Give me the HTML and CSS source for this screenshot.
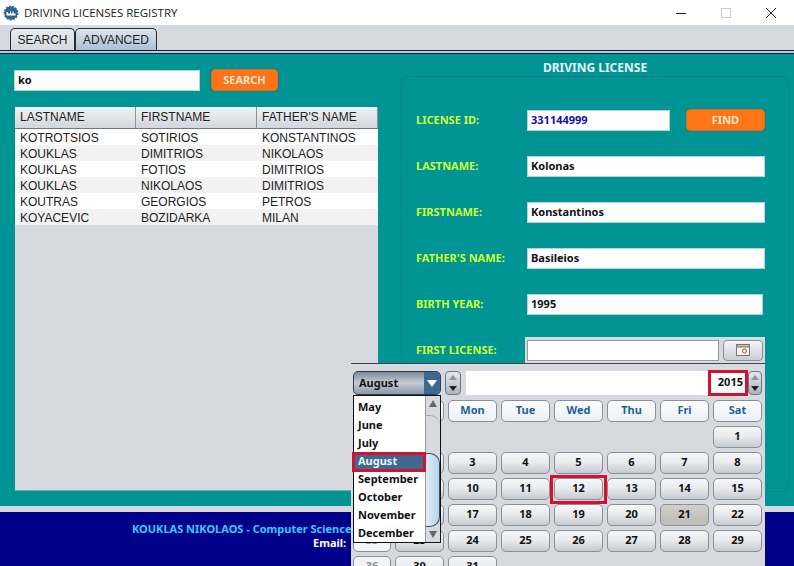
FILE: index.html
```html
<!DOCTYPE html>
<html lang="en">
<head>
  <meta charset="UTF-8">
  <title>Driving Licenses Registry</title>
  <link rel="stylesheet" href="styles.css">
</head>
<body>

  <div class="titlebar">
    <svg class="app-icon" width="16" height="16" viewBox="0 0 16 16">
      <circle cx="8" cy="8" r="6.6" fill="#2f6690" stroke="#2f6690" stroke-width="1.6" stroke-dasharray="2 1.2"/>
      <path d="M3.5 10.5h9V8.5h-2V6.5h-1v2h-1.5V6.5h-1v2H5V7H3.5z" fill="#fff"/>
    </svg>
    <span class="app-title">DRIVING LICENSES REGISTRY</span>
    <div class="winbtns">
      <svg width="12" height="12" viewBox="0 0 12 12"><path d="M1 6.5h10" stroke="#222" stroke-width="1"/></svg>
      <svg width="12" height="12" viewBox="0 0 12 12"><rect x="1.5" y="1.5" width="9" height="9" fill="none" stroke="#ccc"/></svg>
      <svg width="12" height="12" viewBox="0 0 12 12"><path d="M1 1l10 10M11 1L1 11" stroke="#222" stroke-width="1"/></svg>
    </div>
  </div>

  <div class="tabs">
    <div class="tab">SEARCH</div>
    <div class="tab tab-active">ADVANCED</div>
  </div>

  <div class="main">
    <div class="left">
      <div class="search-row">
        <div class="field search-field">ko</div>
        <div class="btn-orange search-btn">SEARCH</div>
      </div>
      <div class="table">
        <div class="table-head">
          <div>LASTNAME</div><div>FIRSTNAME</div><div>FATHER'S NAME</div>
        </div>
        <div class="table-row"><div>KOTROTSIOS</div><div>SOTIRIOS</div><div>KONSTANTINOS</div></div>
        <div class="table-row"><div>KOUKLAS</div><div>DIMITRIOS</div><div>NIKOLAOS</div></div>
        <div class="table-row"><div>KOUKLAS</div><div>FOTIOS</div><div>DIMITRIOS</div></div>
        <div class="table-row"><div>KOUKLAS</div><div>NIKOLAOS</div><div>DIMITRIOS</div></div>
        <div class="table-row"><div>KOUTRAS</div><div>GEORGIOS</div><div>PETROS</div></div>
        <div class="table-row"><div>KOYACEVIC</div><div>BOZIDARKA</div><div>MILAN</div></div>
      </div>
    </div>

    <div class="right">
      <div class="panel-title">DRIVING LICENSE</div>
      <div class="panel">
        <div class="form-row">
          <label>LICENSE ID:</label>
          <div class="field id-field">331144999</div>
          <div class="btn-orange find-btn">FIND</div>
        </div>
        <div class="form-row">
          <label>LASTNAME:</label>
          <div class="field wide-field">Kolonas</div>
        </div>
        <div class="form-row">
          <label>FIRSTNAME:</label>
          <div class="field wide-field">Konstantinos</div>
        </div>
        <div class="form-row">
          <label>FATHER'S NAME:</label>
          <div class="field wide-field">Basileios</div>
        </div>
        <div class="form-row">
          <label>BIRTH YEAR:</label>
          <div class="field year-field">1995</div>
        </div>
        <div class="form-row license-row">
          <label>FIRST LICENSE:</label>
          <div class="date-box">
            <div class="field date-field"></div>
            <div class="date-btn">
              <svg width="14" height="12" viewBox="0 0 14 12">
                <rect x="0.5" y="0.5" width="13" height="11" fill="#f6f3ee" stroke="#777"/>
                <rect x="0.5" y="0.5" width="13" height="2.5" fill="#c9b9a6" stroke="#777"/>
                <circle cx="8.5" cy="7" r="2" fill="none" stroke="#b5504a"/>
              </svg>
            </div>
          </div>
        </div>
      </div>
    </div>
  </div>

  <div class="footer">
    <div class="footer-name">KOUKLAS NIKOLAOS - Computer Science</div>
    <div class="footer-mail">Email:</div>
  </div>

  <div class="calendar">
    <div class="cal-top">
      <div class="month-combo">
        <span>August</span>
        <div class="combo-arrow"></div>
      </div>
      <div class="spinner"><i class="up"></i><i class="down"></i></div>
      <div class="year-field-cal">2015</div>
      <div class="spinner year-spinner"><i class="up"></i><i class="down"></i></div>
    </div>
    <div class="cal-grid">
      <div class="cell-empty"></div>
      <div class="day-name">Sun</div><div class="day-name">Mon</div><div class="day-name">Tue</div><div class="day-name">Wed</div><div class="day-name">Thu</div><div class="day-name">Fri</div><div class="day-name">Sat</div>

      <div class="week">31</div>
      <div class="cell-empty"></div><div class="cell-empty"></div><div class="cell-empty"></div><div class="cell-empty"></div><div class="cell-empty"></div><div class="cell-empty"></div><div class="day">1</div>

      <div class="week">32</div>
      <div class="day">2</div><div class="day">3</div><div class="day">4</div><div class="day">5</div><div class="day">6</div><div class="day">7</div><div class="day">8</div>

      <div class="week">33</div>
      <div class="day">9</div><div class="day">10</div><div class="day">11</div><div class="day day-marked">12</div><div class="day">13</div><div class="day">14</div><div class="day">15</div>

      <div class="week">34</div>
      <div class="day">16</div><div class="day">17</div><div class="day">18</div><div class="day">19</div><div class="day">20</div><div class="day day-today">21</div><div class="day">22</div>

      <div class="week">35</div>
      <div class="day">23</div><div class="day">24</div><div class="day">25</div><div class="day">26</div><div class="day">27</div><div class="day">28</div><div class="day">29</div>

      <div class="week">36</div>
      <div class="day">30</div><div class="day">31</div>
    </div>

    <div class="month-list">
      <div class="month-items">
        <div>May</div>
        <div>June</div>
        <div>July</div>
        <div class="month-selected">August</div>
        <div>September</div>
        <div>October</div>
        <div>November</div>
        <div>December</div>
      </div>
      <div class="scroll">
        <div class="scroll-up"></div>
        <div class="scroll-track"><div class="scroll-thumb"></div></div>
        <div class="scroll-down"></div>
      </div>
    </div>
  </div>

</body>
</html>
```

FILE: styles.css
```css
*, *::after {
  margin: 0;
  padding: 0;
  box-sizing: border-box;
}

body {
  width: 794px;
  height: 566px;
  overflow: hidden;
  position: relative;
  display: flex;
  flex-direction: column;
  background: #d6d9e0;
  font-family: "Noto Sans", Tahoma, sans-serif;
  font-size: 11px;
}

/* window title */
.titlebar {
  height: 25px;
  background: #fff;
  display: flex;
  align-items: center;
  padding-left: 3px;
}

.app-icon {
  margin-right: 5px;
}

.app-title {
  font-family: "Open Sans", "Liberation Sans", sans-serif;
  font-size: 11.5px;
  color: #222;
}

.winbtns {
  margin-left: auto;
  display: flex;
  gap: 33px;
  padding-right: 17px;
}

/* tabs */
.tabs {
  height: 29px;
  padding: 3px 0 0 10px;
  display: flex;
  background: #d6d9e0;
  box-shadow: inset 0 -1px 0 #0a2233, inset 0 -3px 0 #b8c8da, inset 0 -4px 0 #0a2233;
}

.tab {
  height: 22px;
  width: 65px;
  border: 1px solid #222c36;
  border-bottom: 0;
  border-radius: 5px 5px 0 0;
  font-family: "Liberation Sans", Arial, sans-serif;
  font-size: 12px;
  text-align: center;
  line-height: 22px;
  color: #222;
  background: linear-gradient(#e6e9ee, #d6d9e0);
}

.tab-active {
  width: 82px;
  background: linear-gradient(#dfe4ea, #a9c0d6);
}

/* main area */
.main {
  height: 452px;
  background: #009494;
  display: flex;
}

.left {
  width: 400px;
  padding: 15px 0 0 14px;
}

.search-row {
  display: flex;
  align-items: center;
  gap: 11px;
}

.field {
  height: 21px;
  background: #fff;
  border: 1px solid #b4d6da;
  padding-left: 3px;
  line-height: 17px;
  font-weight: bold;
  color: #111;
}

.search-field {
  width: 186px;
}

.btn-orange {
  height: 22px;
  border-radius: 4px;
  background: #ff7417;
  border: 1px solid #d9701f;
  box-shadow: 0 0 1px #00595c;
  color: #f6e6d6;
  font-weight: bold;
  text-align: center;
  line-height: 19px;
}

.search-btn {
  width: 67px;
}

.table {
  width: 363px;
  height: 384px;
  margin: 16px 0 0 1px;
  background: #d6d9e0;
  border-bottom: 1px solid #7da6a8;
  font-family: "Liberation Sans", Arial, sans-serif;
  font-size: 12px;
  color: #222;
}

.table-head {
  height: 22px;
  display: grid;
  grid-template-columns: repeat(3, 121px);
  background: linear-gradient(#f0f1f4, #d3d6dd);
  border-bottom: 1px solid #6f7780;
  line-height: 21px;
}

.table-head div {
  padding-left: 5px;
  border-right: 1px solid #8a929b;
}

.table-row {
  height: 16px;
  display: grid;
  grid-template-columns: repeat(3, 121px);
  background: #fff;
  line-height: 18px;
}

.table-row:nth-child(odd) {
  background: #f2f2f2;
}

.table-row div {
  padding-left: 5px;
}

/* license form */
.right {
  width: 388px;
  margin-left: 1px;
}

.panel-title {
  height: 22px;
  text-align: center;
  padding-top: 6px;
  line-height: 16px;
  font-size: 12px;
  font-weight: bold;
  color: #e6f5f5;
}

.panel {
  height: 416px;
  border: 1px solid #0a8585;
  border-radius: 6px;
  padding-top: 32px;
}

.form-row {
  height: 22px;
  margin-bottom: 24px;
  display: flex;
  align-items: center;
  padding-left: 14px;
}

.form-row label {
  width: 111px;
  padding-bottom: 2px;
  font-weight: bold;
  color: #ccff33;
  flex-shrink: 0;
}

.id-field {
  width: 143px;
  color: #1111aa;
}

.find-btn {
  width: 79px;
  margin-left: 16px;
}

.wide-field {
  width: 238px;
}

.year-field {
  width: 236px;
}

.date-box {
  width: 240px;
  height: 26px;
  margin-left: -2px;
  background: #d6d9e0;
  display: flex;
  align-items: center;
  padding-left: 2px;
  gap: 4px;
}

.date-field {
  width: 192px;
  border-color: #999;
}

.date-btn {
  width: 40px;
  height: 21px;
  border: 1px solid #8a8f96;
  border-radius: 4px;
  background: linear-gradient(#f4f5f7, #c9cdd4);
  display: flex;
  align-items: center;
  justify-content: center;
}

/* footer */
.footer {
  height: 54px;
  margin-top: 6px;
  background: #00008b;
  font-weight: bold;
  line-height: 14px;
  padding-top: 10px;
}

.footer-name {
  padding-left: 132px;
  color: #33ccff;
}

.footer-mail {
  padding-left: 313px;
  color: #fff;
}

/* calendar popup */
.calendar {
  position: absolute;
  left: 351px;
  top: 363px;
  width: 414px;
  height: 215px;
  background: #d6d9e0;
  border-top: 1px solid #444;
  padding: 7px 0 0 2px;
  font-weight: bold;
}

.cal-top {
  display: flex;
  height: 24px;
}

.month-combo {
  width: 88px;
  border: 1px solid #2c3e50;
  border-radius: 5px;
  background: linear-gradient(#7d8a99, #c5ccd5 50%, #8897a8);
  color: #111;
  display: flex;
  align-items: center;
  padding-left: 5px;
}

.month-combo span {
  padding-bottom: 2px;
}

.combo-arrow {
  margin-left: auto;
  width: 16px;
  height: 100%;
  background: #3c6a94;
  position: relative;
  border-radius: 0 4px 4px 0;
}

.combo-arrow::after {
  content: "";
  position: absolute;
  left: 3px;
  top: 8px;
  border: 5px solid transparent;
  border-top: 7px solid #fff;
  border-bottom: 0;
}

.spinner {
  width: 16px;
  margin-left: 4px;
  border: 1px solid #66788a;
  border-radius: 4px;
  background: linear-gradient(#e4e7ec, #a9b4c0);
  display: flex;
  flex-direction: column;
  align-items: center;
  justify-content: space-around;
}

.spinner i {
  width: 0;
  height: 0;
  border-left: 4px solid transparent;
  border-right: 4px solid transparent;
}

.spinner .up {
  border-bottom: 5px solid #8a96a3;
}

.spinner .down {
  border-top: 5px solid #222;
}

.year-field-cal {
  width: 282px;
  margin-left: 5px;
  background: #fff;
  text-align: right;
  line-height: 22px;
  padding-right: 5px;
  color: #111;
  position: relative;
}

.year-field-cal::after {
  content: "";
  position: absolute;
  right: 0;
  top: -1px;
  width: 40px;
  height: 26px;
  border: 3px solid #d2122e;
}

.year-spinner {
  width: 14px;
  margin-left: 0;
}

.cal-grid {
  display: grid;
  grid-template-columns: 38px repeat(7, 49px);
  grid-auto-rows: 22px;
  gap: 4px;
  margin-top: 5px;
  text-align: center;
  line-height: 18px;
}

.day-name {
  border: 1px solid #8a8f96;
  border-radius: 5px;
  background: linear-gradient(#fdfeff, #e9f0f6);
  color: #1f5f96;
}

.day {
  border: 1px solid #8a8f96;
  border-radius: 5px;
  background: linear-gradient(#f6f7f9, #e9ebef 45%, #c6cad1);
  color: #111;
}

.day-today {
  background: linear-gradient(#d0cfcb, #c5c4be 50%, #bdbdb7);
}

.day-marked {
  position: relative;
}

.day-marked::after {
  content: "";
  position: absolute;
  left: -5px;
  top: -4px;
  width: 57px;
  height: 29px;
  border: 3px solid #d2122e;
}

.week {
  border: 1px solid #8a8f96;
  border-radius: 5px;
  background: #f2f4f7;
  color: #8a8f96;
}

/* month dropdown */
.month-list {
  position: absolute;
  left: 2px;
  top: 31px;
  width: 88px;
  height: 148px;
  border: 1px solid #111;
  background: #fff;
  display: flex;
  color: #111;
}

.month-items {
  width: 72px;
  padding-top: 3px;
  line-height: 16px;
  white-space: nowrap;
}

.month-items div {
  height: 18px;
  padding-left: 4px;
}

.month-items .month-selected {
  background: #3d6a8e;
  color: #eef3f7;
  position: relative;
}

.month-selected::after {
  content: "";
  position: absolute;
  left: -2px;
  top: -1px;
  width: 74px;
  height: 20px;
  border: 3px solid #d2122e;
}

.scroll {
  width: 15px;
  background: #d6d9e0;
  border-left: 1px solid #999;
  display: flex;
  flex-direction: column;
  align-items: center;
}

.scroll-up,
.scroll-down {
  width: 0;
  height: 0;
  margin: 4px 0;
  border-left: 4px solid transparent;
  border-right: 4px solid transparent;
}

.scroll-up {
  border-bottom: 7px solid #666;
}

.scroll-down {
  border-top: 7px solid #666;
}

.scroll-track {
  flex: 1;
  width: 100%;
  padding-top: 37px;
  margin-top: 4px;
  border-top: 1px solid #a4a8ae;
  border-radius: 0 10px 0 0;
}

.scroll-thumb {
  height: 74px;
  border: 1px solid #33506b;
  border-left: 0;
  border-radius: 0 10px 10px 0;
  background: linear-gradient(90deg, #e4ecf3, #b6d2ea);
}
```
